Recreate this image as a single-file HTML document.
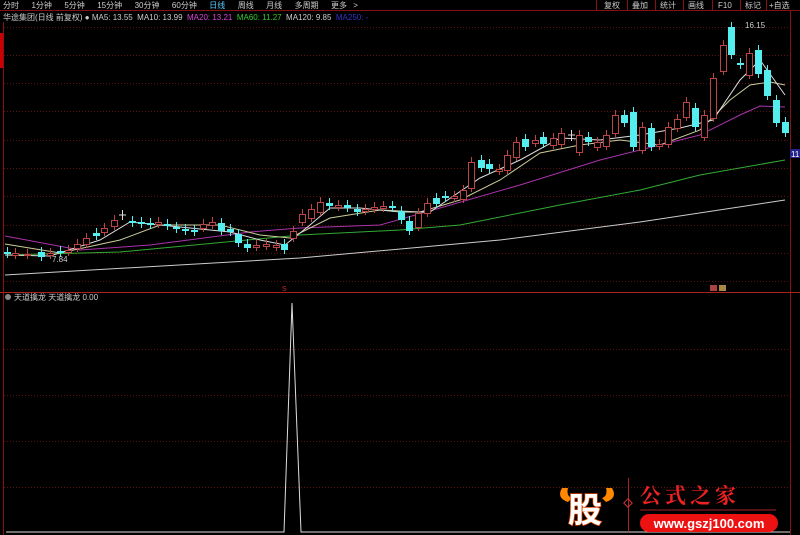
<!DOCTYPE html>
<html><head><meta charset="utf-8"><style>
body{margin:0;background:#000;width:800px;height:535px;overflow:hidden;font-family:"Liberation Sans","Noto Sans CJK SC",sans-serif;}
.t{position:absolute;font-size:8px;white-space:nowrap}
</style></head><body>
<div style="position:relative;width:800px;height:535px">
<div class="t" style="left:3px;top:0;color:#ccc;word-spacing:4px">分时 &nbsp;1分钟 &nbsp;5分钟 &nbsp;15分钟 &nbsp;30分钟 &nbsp;60分钟 &nbsp;<span style="color:#5cf">日线</span> &nbsp;周线 &nbsp;月线 &nbsp;多周期 &nbsp;更多 &gt;</div>
<div class="t" style="left:3px;top:12px;color:#ccc">华途集团(日线 前复权) ● MA5: 13.55 &nbsp;MA10: 13.99 &nbsp;<span style="color:#d4d">MA20: 13.21</span> &nbsp;<span style="color:#3c3">MA60: 11.27</span> &nbsp;MA120: 9.85 &nbsp;<span style="color:#33c">MA250: -</span></div>
<svg width="800" height="535" style="position:absolute;left:0;top:0" id="s">
<g stroke="#8a1111" stroke-width="1">
<line x1="0" y1="10.5" x2="800" y2="10.5"/>
<line x1="3.5" y1="22" x2="3.5" y2="535"/>
<line x1="790.5" y1="10" x2="790.5" y2="535"/>
<line x1="0" y1="292.5" x2="800" y2="292.5" stroke="#aa2222"/>
<line x1="596.5" y1="0" x2="596.5" y2="10"/><line x1="627.5" y1="0" x2="627.5" y2="10"/><line x1="655.5" y1="0" x2="655.5" y2="10"/><line x1="683.5" y1="0" x2="683.5" y2="10"/><line x1="712.5" y1="0" x2="712.5" y2="10"/><line x1="740.5" y1="0" x2="740.5" y2="10"/><line x1="766.5" y1="0" x2="766.5" y2="10"/>
</g>
<g stroke="#5a1010" stroke-dasharray="1,2">
<line x1="4" y1="27.5" x2="790" y2="27.5"/><line x1="4" y1="55.5" x2="790" y2="55.5"/><line x1="4" y1="83.5" x2="790" y2="83.5"/><line x1="4" y1="111.5" x2="790" y2="111.5"/><line x1="4" y1="140.5" x2="790" y2="140.5"/><line x1="4" y1="168.5" x2="790" y2="168.5"/><line x1="4" y1="196.5" x2="790" y2="196.5"/><line x1="4" y1="225.5" x2="790" y2="225.5"/><line x1="4" y1="253.5" x2="790" y2="253.5"/><line x1="4" y1="281.5" x2="790" y2="281.5"/>
<line x1="4" y1="349.5" x2="790" y2="349.5"/><line x1="4" y1="395.5" x2="790" y2="395.5"/><line x1="4" y1="441.5" x2="790" y2="441.5"/><line x1="4" y1="487.5" x2="790" y2="487.5"/>
</g>
<rect x="0" y="33" width="3" height="35" fill="#c00"/>
<g fill="none" stroke-width="1">
<polyline stroke="#ccc" points="5,275 300,258 500,240 640,222 785,200"/>
<polyline stroke="#3a3" points="5,255 120,252 300,235 400,230 460,225 560,205 640,190 700,175 785,160"/>
<polyline stroke="#a3a" points="5,236 80,250 150,245 250,232 300,228 380,225 440,208 520,185 600,160 640,150 700,135 740,115 760,106 785,107"/>
<polyline stroke="#cc9" points="5,244 60,253 120,240 160,225 220,225 260,235 290,238 330,218 380,210 420,212 460,200 500,180 540,153 580,145 620,140 660,145 700,130 730,100 750,85 770,82 785,85"/>
<polyline stroke="#ddd" points="5,255 50,256 100,240 130,222 180,227 230,232 260,240 285,245 310,225 330,208 360,208 400,212 430,212 480,178 520,160 560,138 600,140 640,135 680,128 713,120 740,80 760,60 785,95"/>
</g>
<g id="c"></g>
<polyline fill="none" stroke="#ddd" points="6,532 284,532 292,303 301,532 790,532"/>
<text x="745" y="28" fill="#ccc" font-size="8" font-family="Liberation Sans">16.15</text>
<text x="52" y="262" fill="#ccc" font-size="8" font-family="Liberation Sans">7.84</text>
<rect x="790" y="149" width="10" height="9" fill="#22228a"/><text x="791" y="157" fill="#fff" font-size="8">11.</text>
<rect x="710" y="285" width="7" height="6" fill="#a44"/><rect x="719" y="285" width="7" height="6" fill="#a84"/>
<text x="282" y="291" fill="#c33" font-size="7">S</text>
<circle cx="8" cy="297" r="3" fill="#888"/>
<text x="14" y="300" fill="#ccc" font-size="8">天道擒龙 天道擒龙 0.00</text>
<!-- buttons -->
<g fill="#ccc" font-size="8">
<text x="604" y="8">复权</text><text x="632" y="8">叠加</text><text x="660" y="8">统计</text><text x="688" y="8">画线</text><text x="718" y="8">F10</text><text x="745" y="8">标记</text><text x="769" y="8">+自选</text>
</g>
<!-- logo -->
<path d="M562 488 q-6 10 6 14 l4-4 q-6-2-4-10z M612 488 q6 10-6 14 l-4-4 q6-2 4-10z" fill="#f80"/>
<text x="568" y="522" fill="#fff" stroke="#d40" stroke-width="1.5" paint-order="stroke" font-size="34" font-weight="bold" font-family="Noto Sans CJK SC">股</text>
<line x1="628.5" y1="478" x2="628.5" y2="532" stroke="#a22"/>
<rect x="625" y="500" width="6" height="6" transform="rotate(45 628 503)" fill="none" stroke="#c33"/>
<text x="640" y="503" fill="#e22" font-size="21" font-weight="bold" font-family="Noto Serif CJK SC" letter-spacing="4">公式之家</text>
<line x1="640" y1="510" x2="776" y2="510" stroke="#a22"/>
<rect x="640" y="514" width="138" height="18" rx="9" fill="#e11"/>
<text x="709" y="528" fill="#fff" font-size="13" font-weight="bold" text-anchor="middle">www.gszj100.com</text>
</svg>
</div>
<script>
var d=[[7,252,254,'c'],[15,253,255,'r'],[27,254,255,'r'],[41,252,257,'c'],[50,253,255,'r'],[60,251,253,'c'],[68,250,252,'r'],[77,244,248,'r'],[86,238,244,'r'],[96,233,236,'c'],[104,228,232,'r'],[114,220,226,'r'],[122,215,216,'w'],[132,221,223,'c'],[141,222,224,'c'],[150,223,225,'c'],[158,222,224,'r'],[167,224,226,'c'],[176,227,229,'c'],[185,229,231,'c'],[194,230,232,'c'],[203,224,228,'r'],[212,222,225,'r'],[221,223,231,'c'],[230,229,232,'c'],[238,234,243,'c'],[247,244,248,'c'],[256,245,247,'r'],[266,244,246,'r'],[276,245,247,'r'],[284,244,250,'c'],[293,231,238,'r'],[302,214,222,'r'],[311,209,218,'r'],[320,202,212,'r'],[329,203,206,'c'],[338,205,207,'r'],[347,205,208,'c'],[357,209,212,'c'],[365,209,211,'r'],[374,207,209,'r'],[383,206,208,'r'],[392,206,208,'c'],[401,211,220,'c'],[409,221,231,'c'],[418,213,227,'r'],[427,203,213,'r'],[436,198,204,'c'],[445,196,198,'c'],[454,196,198,'r'],[463,190,199,'r'],[471,162,188,'r'],[481,160,168,'c'],[489,164,169,'c'],[499,169,171,'r'],[507,155,170,'r'],[516,142,157,'r'],[525,139,147,'c'],[535,140,143,'r'],[543,137,144,'c'],[553,138,145,'r'],[561,133,144,'r'],[571,135,137,'w'],[579,135,152,'r'],[588,137,142,'c'],[597,142,147,'r'],[606,135,146,'r'],[615,115,133,'r'],[624,115,123,'c'],[633,112,147,'c'],[642,127,150,'r'],[651,128,147,'c'],[659,144,146,'r'],[668,127,144,'r'],[677,119,128,'r'],[686,102,117,'r'],[695,108,127,'c'],[704,115,137,'r'],[713,78,118,'r'],[723,45,71,'r'],[731,27,55,'c'],[740,63,65,'c'],[749,53,75,'r'],[758,50,74,'c'],[767,70,96,'c'],[776,100,123,'c'],[785,122,133,'c']];
var s='';d.forEach(function(a){var x=a[0],t=a[1],b=a[2],k=a[3];var col=k=='c'?'#5ee':k=='r'?'#b44':'#ddd';
s+='<line x1="'+(x+.5)+'" y1="'+(t-5)+'" x2="'+(x+.5)+'" y2="'+(b+4)+'" stroke="'+col+'"/>';
if(k=='c')s+='<rect x="'+(x-3)+'" y="'+t+'" width="7" height="'+Math.max(2,b-t)+'" fill="'+col+'"/>';
else if(k=='r')s+='<rect x="'+(x-2.5)+'" y="'+(t+.5)+'" width="6" height="'+Math.max(1,b-t)+'" fill="#000" stroke="'+col+'"/>';
else s+='<line x1="'+(x-3)+'" y1="'+t+'" x2="'+(x+4)+'" y2="'+t+'" stroke="'+col+'"/>';});
document.getElementById('c').innerHTML=s;
</script>
</body></html>
